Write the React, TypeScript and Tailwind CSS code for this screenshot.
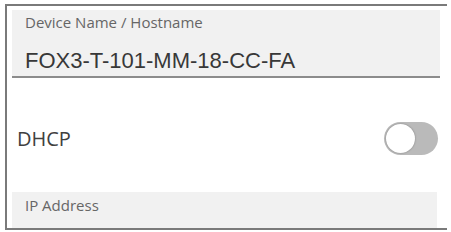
export default function App() {
  return (
    <div className="w-[451px] h-[232px] bg-white pt-[4px] pl-[5px]">
      <div className="w-[442px] h-[226px] border-t-2 border-l-2 border-b-2 border-[#7a7a7a] overflow-hidden pl-[5px] pt-[4px] flex flex-col">
        {/* Hostname field */}
        <div className="w-[428px] bg-[#f1f1f1] border-b-2 border-[#8c8c8c] pl-[13px] pt-[2px] pb-[3px] flex flex-col">
          <span className="text-[15px] leading-[20px] text-[#666] font-['Open_Sans',sans-serif]">
            Device Name / Hostname
          </span>
          <span className="mt-[16px] text-[22px] leading-[25px] text-[#383838] font-['Liberation_Sans',Arial,sans-serif]">
            FOX3-T-101-MM-18-CC-FA
          </span>
        </div>

        {/* DHCP toggle row */}
        <div className="w-[428px] h-[33px] mt-[44px] pl-[5px] pr-[2px] flex items-center justify-between">
          <span className="text-[20px] leading-[26px] text-[#404040] font-['Open_Sans',sans-serif]">DHCP</span>
          <div className="w-[54px] h-[33px] rounded-full bg-[#bababa] p-[2px] flex items-center">
            <div className="w-[29px] h-[29px] rounded-full bg-white shadow-[0_0_2px_rgba(0,0,0,0.35)]" />
          </div>
        </div>

        {/* IP address field */}
        <div className="w-[425px] flex-1 mt-[37px] bg-[#f1f1f1] pl-[13px] pt-[1px]">
          <span className="text-[15px] leading-[20px] text-[#666] font-['Open_Sans',sans-serif]">IP Address</span>
        </div>
      </div>
    </div>
  )
}
